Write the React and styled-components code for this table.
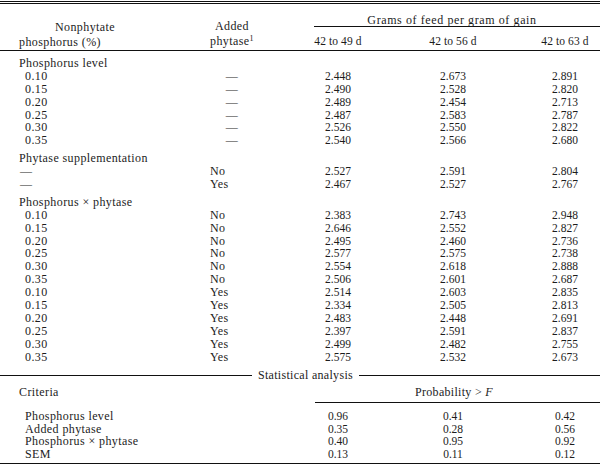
import styled, { createGlobalStyle } from 'styled-components'

// Grille commune : libellé, phytase, trois périodes

const COLS = '200px 64px 148px 82px 1fr'

const GlobalStyle = createGlobalStyle`
  html, body {
    margin: 0;
    padding: 0;
    background: #ffffff;
  }
  body {
    font-family: "Liberation Serif", "Times New Roman", serif;
    color: #1c1c1c;
  }
`

const Table = styled.div`
  width: 600px;
  padding-top: 1px;
`

const Head = styled.div`
  display: grid;
  grid-template-columns: ${COLS};
  border-top: 3px double #111111;
  border-bottom: 1px solid #111111;
`

const StubHead = styled.div`
  grid-column: 1;
  grid-row: 1 / 3;
  align-self: end;
  font-size: 12px;
  letter-spacing: 0.4px;
  line-height: 15px;
`

const HeadLine = styled.div`
  padding-left: ${(p) => p.$indent}px;
`

const AddedHead = styled.div`
  grid-column: 2;
  grid-row: 1 / 3;
  align-self: end;
  text-align: center;
  font-size: 12px;
  letter-spacing: 0.4px;
  line-height: 15px;
  padding-bottom: 1px;
  sup {
    font-size: 8px;
    vertical-align: 4px;
    line-height: 0;
  }
`

const GroupHead = styled.div`
  grid-column: 3 / 6;
  grid-row: 1;
  margin-left: 50px;
  padding: 10px 10px 0 0;
  line-height: 12px;
  font-size: 12px;
  letter-spacing: 0.6px;
  text-align: center;
  border-bottom: 1px solid #111111;
`

const PeriodHead = styled.div`
  grid-row: 2;
  padding: 8px 0 3px;
  line-height: 12px;
  font-size: 11.5px;
  letter-spacing: 0.1px;
  text-align: center;
  &:last-child {
    padding-left: 36px;
  }
`

const Body = styled.div`
  padding-top: 6px;
`

const Section = styled.div`
  & + & {
    margin-top: 5px;
  }
`

const Row = styled.div`
  display: grid;
  grid-template-columns: ${COLS};
  height: 12.9px;
  line-height: 12.9px;
`

const Label = styled.div`
  grid-column: ${(p) => (p.$wide ? '1 / -1' : '1')};
  padding-left: ${(p) => p.$indent}px;
  font-size: 12px;
  letter-spacing: 0.4px;
  white-space: nowrap;
`

const Added = styled.div`
  font-size: 12px;
  letter-spacing: 0.4px;
  text-align: ${(p) => (p.$dash ? 'center' : 'left')};
  padding-left: ${(p) => (p.$dash ? 0 : 10)}px;
`

const Num = styled.div`
  font-size: 11.5px;
  text-align: center;
  &:last-child {
    padding-left: 36px;
  }
`

const Divider = styled.div`
  display: grid;
  grid-template-columns: 252px auto 1fr;
  gap: 6px;
  align-items: center;
  margin-top: 6px;
  line-height: 12.9px;
  font-size: 12px;
  letter-spacing: 0.3px;
`

const Rule = styled.div`
  border-top: 1px solid #111111;
`

const StatHead = styled.div`
  display: grid;
  grid-template-columns: ${COLS};
  margin-top: 4px;
`

const Criteria = styled.div`
  grid-column: 1;
  align-self: start;
  padding-left: 19px;
  line-height: 12.9px;
  font-size: 12px;
  letter-spacing: 0.4px;
`

const ProbHead = styled.div`
  grid-column: 3 / 6;
  margin-left: 51px;
  padding: 0 7px 3px 0;
  line-height: 12.9px;
  font-size: 12px;
  letter-spacing: 0.3px;
  text-align: center;
  border-bottom: 1px solid #111111;
`

const StatBody = styled.div`
  padding: 7px 0 2px;
  border-bottom: 1px solid #111111;
`

const StatRow = styled(Row)`
  height: 12.6px;
  line-height: 12.6px;
`

const DASH = '—'

const sections = [
  {
    title: 'Phosphorus level',
    rows: [
      ['0.10', DASH, '2.448', '2.673', '2.891'],
      ['0.15', DASH, '2.490', '2.528', '2.820'],
      ['0.20', DASH, '2.489', '2.454', '2.713'],
      ['0.25', DASH, '2.487', '2.583', '2.787'],
      ['0.30', DASH, '2.526', '2.550', '2.822'],
      ['0.35', DASH, '2.540', '2.566', '2.680'],
    ],
  },
  {
    title: 'Phytase supplementation',
    dashLabel: true,
    rows: [
      [DASH, 'No', '2.527', '2.591', '2.804'],
      [DASH, 'Yes', '2.467', '2.527', '2.767'],
    ],
  },
  {
    title: 'Phosphorus × phytase',
    rows: [
      ['0.10', 'No', '2.383', '2.743', '2.948'],
      ['0.15', 'No', '2.646', '2.552', '2.827'],
      ['0.20', 'No', '2.495', '2.460', '2.736'],
      ['0.25', 'No', '2.577', '2.575', '2.738'],
      ['0.30', 'No', '2.554', '2.618', '2.888'],
      ['0.35', 'No', '2.506', '2.601', '2.687'],
      ['0.10', 'Yes', '2.514', '2.603', '2.835'],
      ['0.15', 'Yes', '2.334', '2.505', '2.813'],
      ['0.20', 'Yes', '2.483', '2.448', '2.691'],
      ['0.25', 'Yes', '2.397', '2.591', '2.837'],
      ['0.30', 'Yes', '2.499', '2.482', '2.755'],
      ['0.35', 'Yes', '2.575', '2.532', '2.673'],
    ],
  },
]

const stats = [
  ['Phosphorus level', '0.96', '0.41', '0.42'],
  ['Added phytase', '0.35', '0.28', '0.56'],
  ['Phosphorus × phytase', '0.40', '0.95', '0.92'],
  ['SEM', '0.13', '0.11', '0.12'],
]

const App = () => {
  return (
    <>
      <GlobalStyle />
      <Table>
        <Head>
          <StubHead>
            <HeadLine $indent={55}>Nonphytate</HeadLine>
            <HeadLine $indent={19}>phosphorus (%)</HeadLine>
          </StubHead>
          <AddedHead>
            <div>Added</div>
            <div>
              phytase<sup>1</sup>
            </div>
          </AddedHead>
          <GroupHead>Grams of feed per gram of gain</GroupHead>
          <PeriodHead>42 to 49 d</PeriodHead>
          <PeriodHead>42 to 56 d</PeriodHead>
          <PeriodHead>42 to 63 d</PeriodHead>
        </Head>

        <Body>
          {sections.map((section) => (
            <Section key={section.title}>
              <Row>
                <Label $indent={19} $wide>
                  {section.title}
                </Label>
              </Row>
              {section.rows.map(([level, added, a, b, c], i) => (
                <Row key={i}>
                  <Label $indent={section.dashLabel ? 20 : 25}>{level}</Label>
                  <Added $dash={added === DASH}>{added}</Added>
                  <Num>{a}</Num>
                  <Num>{b}</Num>
                  <Num>{c}</Num>
                </Row>
              ))}
            </Section>
          ))}
        </Body>

        <Divider>
          <Rule />
          <span>Statistical analysis</span>
          <Rule />
        </Divider>

        <StatHead>
          <Criteria>Criteria</Criteria>
          <ProbHead>
            Probability &gt; <i>F</i>
          </ProbHead>
        </StatHead>

        <StatBody>
          {stats.map(([name, a, b, c]) => (
            <StatRow key={name}>
              <Label $indent={25}>{name}</Label>
              <Added />
              <Num>{a}</Num>
              <Num>{b}</Num>
              <Num>{c}</Num>
            </StatRow>
          ))}
        </StatBody>
      </Table>
    </>
  )
}

export default App
